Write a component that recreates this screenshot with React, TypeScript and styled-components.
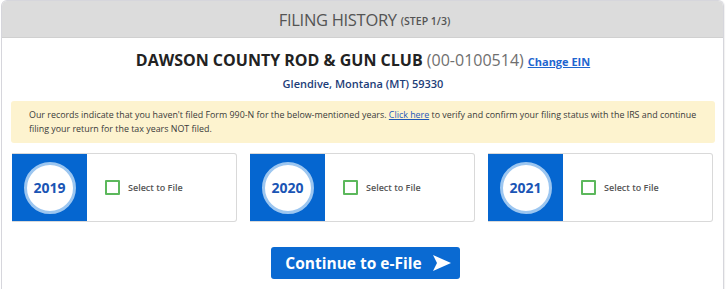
import React from "react";
import styled, { createGlobalStyle } from "styled-components";

const Global = createGlobalStyle`
  html, body { margin: 0; padding: 0; background: #fff; }
  body { font-family: "Open Sans", "Liberation Sans", sans-serif; }
`;

const Page = styled.div`
  padding: 0 2px 0 1px;
  height: 289px;
  overflow: hidden;
`;

const Panel = styled.div`
  border: 1px solid #d6d6dc;
  border-bottom: none;
  border-radius: 6px 6px 0 0;
  box-shadow: 1px 0 1px rgba(0, 0, 0, 0.06);
  height: 300px;
  overflow: hidden;
`;

const Header = styled.div`
  background: #dcdcdc;
  height: 36px;
  display: flex;
  align-items: center;
  justify-content: center;
  border-bottom: 1px solid #d0d0d0;
  gap: 4px;
  padding-left: 4px;
`;

const HeaderTitle = styled.span`
  font-size: 16.5px;
  color: #545454;
  letter-spacing: -0.3px;
`;

const HeaderStep = styled.span`
  font-size: 10.5px;
  font-weight: 600;
  color: #545454;
  margin-top: 4px;
`;

const Body = styled.div`
  padding: 11px 8px 0 9px;
  display: flex;
  flex-direction: column;
`;

const OrgLine = styled.div`
  text-align: center;
  font-size: 16px;
  line-height: 22px;
`;

const OrgName = styled.span`
  font-weight: 700;
  color: #222;
`;

const Ein = styled.span`
  color: #6f6f6f;
`;

const ChangeLink = styled.a`
  font-size: 11px;
  font-weight: 700;
  color: #1f66cf;
  text-decoration: underline;
  margin-left: 4px;
`;

const Address = styled.div`
  text-align: center;
  font-size: 11px;
  font-weight: 600;
  color: #1d3d78;
  margin-top: 2px;
  line-height: 18px;
`;

const Alert = styled.div`
  margin-top: 8px;
  background: #fdf3cf;
  border-radius: 3px;
  padding: 7px 8px 7px 18px;
  font-size: 8.9px;
  line-height: 14px;
  color: #3a3a3a;
`;

const AlertLink = styled.a`
  color: #1f58b8;
  text-decoration: underline;
`;

const Cards = styled.div`
  margin-top: 10px;
  display: grid;
  grid-template-columns: repeat(3, 225px);
  column-gap: 13px;
  padding-left: 1px;
`;

const Card = styled.div`
  display: flex;
  height: 67px;
  border: 1px solid #d9d9d9;
  border-left: none;
  border-radius: 0 3px 3px 0;
`;

const YearBlock = styled.div`
  width: 75px;
  background: #0566d0;
  display: flex;
  align-items: center;
  justify-content: center;
  flex-shrink: 0;
`;

const YearCircle = styled.div`
  width: 46px;
  height: 46px;
  border-radius: 50%;
  background: #fff;
  border: 3px solid #9cc6f0;
  display: flex;
  align-items: center;
  justify-content: center;
  font-size: 14px;
  font-weight: 700;
  color: #1a55b5;
`;

const SelectArea = styled.label`
  display: flex;
  align-items: center;
  gap: 8px;
  padding-left: 18px;
`;

const Box = styled.span`
  width: 11px;
  height: 11px;
  border: 2px solid #5cb85c;
  border-radius: 1px;
  display: inline-block;
`;

const SelectText = styled.span`
  font-size: 9px;
  font-weight: 600;
  color: #555;
`;

const ButtonRow = styled.div`
  display: flex;
  justify-content: center;
  margin-top: 25px;
`;

const Button = styled.button`
  width: 189px;
  height: 32px;
  background: #0a6ad2;
  border: none;
  border-radius: 3px;
  color: #fff;
  font-family: "Open Sans", "Liberation Sans", sans-serif;
  font-size: 15.5px;
  font-weight: 700;
  display: flex;
  align-items: center;
  justify-content: center;
  gap: 11px;
  padding: 0 0 0 6px;
  margin-left: 4px;
`;

const Arrow = () => (
  <svg width="18" height="16" viewBox="0 0 18 16">
    <path d="M0 0 L18 8 L0 16 L4 8 Z" fill="#fff" />
  </svg>
);

const years = ["2019", "2020", "2021"];

export default function App() {
  return (
    <>
      <Global />
      <Page>
        <Panel>
          <Header>
            <HeaderTitle>FILING HISTORY</HeaderTitle>
            <HeaderStep>(STEP 1/3)</HeaderStep>
          </Header>
          <Body>
            <OrgLine>
              <OrgName>DAWSON COUNTY ROD &amp; GUN CLUB</OrgName>{" "}
              <Ein>(00-0100514)</Ein>
              <ChangeLink href="#">Change EIN</ChangeLink>
            </OrgLine>
            <Address>Glendive, Montana (MT) 59330</Address>
            <Alert>
              Our records indicate that you haven't filed Form 990-N for the
              below-mentioned years. <AlertLink href="#">Click here</AlertLink> to
              verify and confirm your filing status with the IRS and continue
              filing your return for the tax years NOT filed.
            </Alert>
            <Cards>
              {years.map((y) => (
                <Card key={y}>
                  <YearBlock>
                    <YearCircle>{y}</YearCircle>
                  </YearBlock>
                  <SelectArea>
                    <Box />
                    <SelectText>Select to File</SelectText>
                  </SelectArea>
                </Card>
              ))}
            </Cards>
            <ButtonRow>
              <Button>
                Continue to e-File
                <Arrow />
              </Button>
            </ButtonRow>
          </Body>
        </Panel>
      </Page>
    </>
  );
}
